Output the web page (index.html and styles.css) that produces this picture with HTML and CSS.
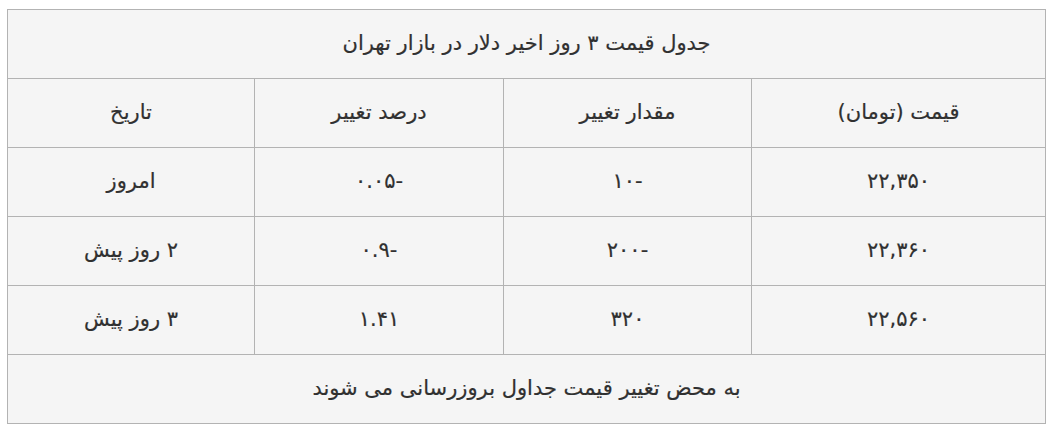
FILE: index.html
```html
<!DOCTYPE html>
<html lang="fa" dir="rtl">
<head>
<meta charset="utf-8">
<link rel="stylesheet" href="styles.css">
</head>
<body>
<table class="price-table">
  <colgroup>
    <col class="col-price">
    <col class="col-change">
    <col class="col-percent">
    <col class="col-date">
  </colgroup>
  <thead>
    <tr><th class="caption-cell" colspan="4">جدول قیمت ۳ روز اخیر دلار در بازار تهران</th></tr>
    <tr>
      <th>قیمت (تومان)</th>
      <th>مقدار تغییر</th>
      <th>درصد تغییر</th>
      <th>تاریخ</th>
    </tr>
  </thead>
  <tbody>
    <tr><td>۲۲,۳۵۰</td><td>-۱۰</td><td>-۰.۰۵</td><td>امروز</td></tr>
    <tr><td>۲۲,۳۶۰</td><td>-۲۰۰</td><td>-۰.۹</td><td>۲ روز پیش</td></tr>
    <tr><td>۲۲,۵۶۰</td><td>۳۲۰</td><td>۱.۴۱</td><td>۳ روز پیش</td></tr>
  </tbody>
  <tfoot>
    <tr><td class="caption-cell" colspan="4">به محض تغییر قیمت جداول بروزرسانی می شوند</td></tr>
  </tfoot>
</table>
</body>
</html>
```

FILE: styles.css
```css
html, body {
  margin: 0;
  padding: 0;
  background: #ffffff;
}
body {
  padding: 9px 8px 0 8px;
  font-family: "DejaVu Sans", sans-serif;
  color: #333333;
}
.price-table {
  width: 1038px;
  border-collapse: collapse;
  background: #f5f5f5;
  table-layout: fixed;
}
.col-price { width: 294px; }
.col-change { width: 248px; }
.col-percent { width: 249px; }
.col-date { width: 247px; }
.price-table th,
.price-table td {
  box-sizing: border-box;
  border: 1px solid #b3b3b3;
  height: 69px;
  padding: 0 8px 3px 8px;
  text-align: center;
  vertical-align: middle;
  font-size: 21px;
  font-weight: normal;
  color: #303030;
  -webkit-text-stroke: 0.2px #303030;
}
```
